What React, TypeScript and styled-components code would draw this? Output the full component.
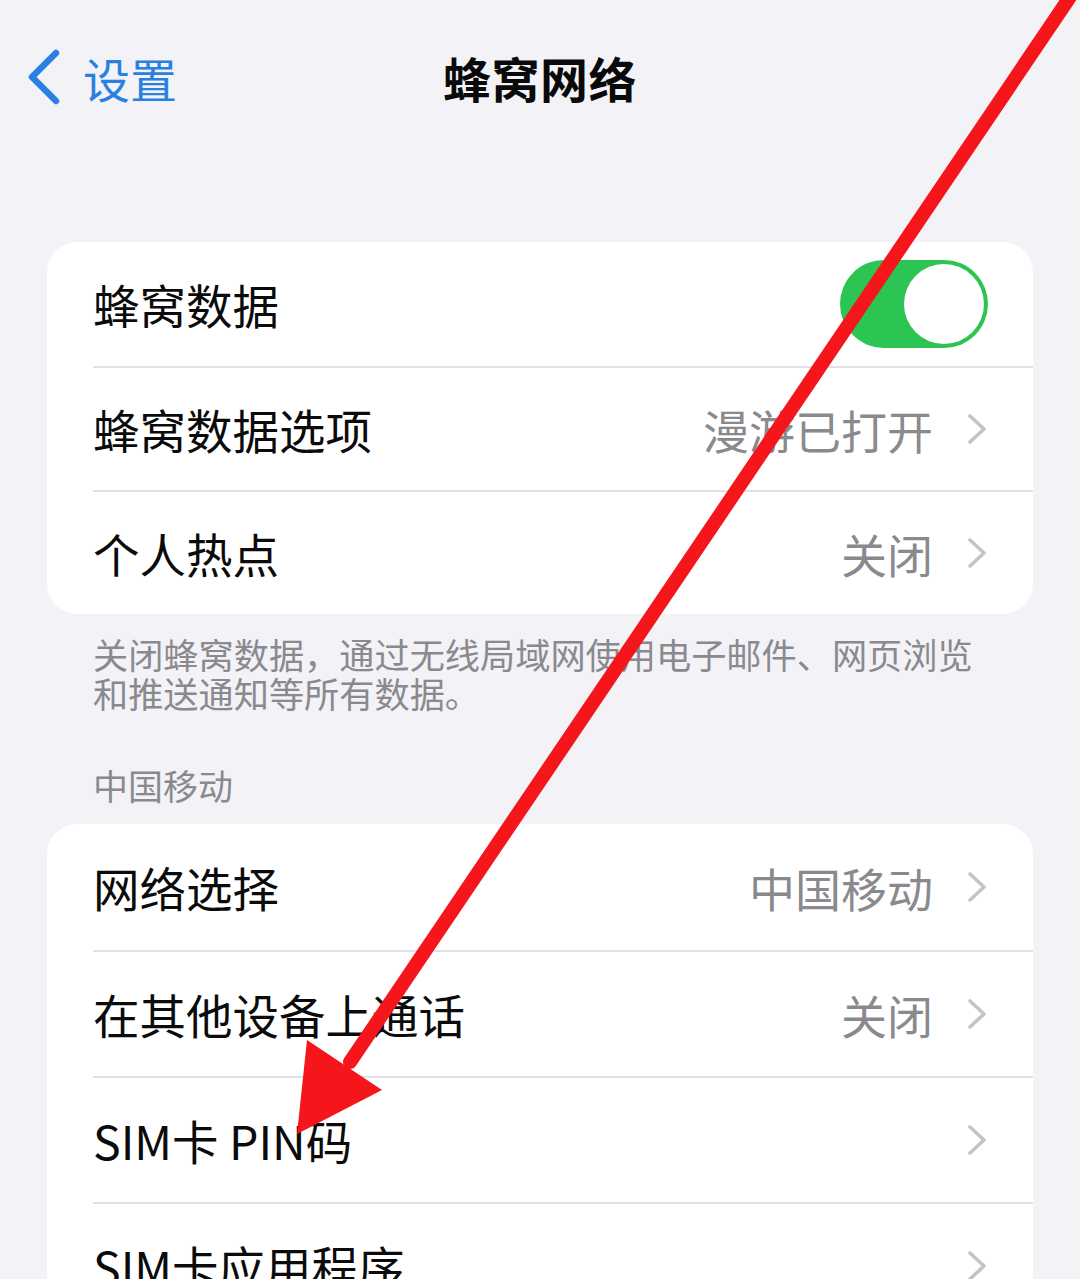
import styled, { createGlobalStyle } from "styled-components";

const GlobalStyle = createGlobalStyle`
  html, body {
    margin: 0;
    padding: 0;
    background: #f2f2f7;
    overflow: hidden;
  }
  body {
    font-family: "Noto Sans CJK SC", "Noto Sans", sans-serif;
    color: #0a0a0a;
  }
`;

const Screen = styled.div`
  position: relative;
  width: 1080px;
  height: 1279px;
  overflow: hidden;
  background: #f2f2f7;
`;

const NavBar = styled.div`
  display: grid;
  grid-template-columns: 1fr auto 1fr;
  align-items: center;
  height: 154px;
  padding: 0 25px;
`;

const BackButton = styled.div`
  display: flex;
  align-items: center;
  gap: 22px;
  color: #2a80e0;
  font-size: 47px;
  line-height: 1;
`;

const NavTitle = styled.h1`
  margin: 0;
  font-size: 48px;
  font-weight: 700;
  line-height: 1;
  letter-spacing: 0.5px;
`;

const Content = styled.div`
  padding: 0 47px;
`;

const Card = styled.div<{ $top: number }>`
  margin-top: ${(p) => p.$top}px;
  background: #ffffff;
  border-radius: 30px;
  overflow: hidden;
`;

const Row = styled.div`
  padding-left: 46px;
`;

const RowBody = styled.div<{ $h: number; $first?: boolean }>`
  box-sizing: border-box;
  height: ${(p) => p.$h}px;
  display: flex;
  align-items: center;
  padding-right: 46px;
  border-top: ${(p) => (p.$first ? "none" : "2px solid #e1e1e5")};
`;

const Label = styled.span`
  flex: 1;
  font-size: 46.5px;
  line-height: 1;
  color: #0b0b0b;
`;

const Value = styled.span`
  font-size: 46px;
  line-height: 1;
  color: #8a8a8e;
  margin-right: 34px;
`;

const Toggle = styled.div`
  position: relative;
  width: 148px;
  height: 88px;
  border-radius: 44px;
  background: #2cc553;
  margin-right: -1px;
`;

const Knob = styled.div`
  position: absolute;
  top: 4px;
  right: 4px;
  width: 80px;
  height: 80px;
  border-radius: 50%;
  background: #ffffff;
`;

const Footer = styled.p`
  margin: 20px 0 0;
  padding-left: 46px;
  font-size: 35.2px;
  line-height: 39px;
  color: #8a8a8e;
`;

const SectionHeader = styled.div`
  margin-top: 53px;
  padding-left: 46px;
  font-size: 35px;
  line-height: 40px;
  color: #8a8a8e;
`;

const Overlay = styled.svg`
  position: absolute;
  top: 0;
  left: 0;
  pointer-events: none;
`;

const Chevron = () => (
  <svg width="20" height="30" viewBox="0 0 20 30">
    <path
      d="M3 2 L17 15 L3 28"
      fill="none"
      stroke="#c4c4c7"
      strokeWidth="3.6"
      strokeLinecap="round"
      strokeLinejoin="round"
    />
  </svg>
);

const BackChevron = () => (
  <svg width="36" height="56" viewBox="0 0 36 56">
    <path
      d="M31 4 L7 28 L31 52"
      fill="none"
      stroke="#2a80e0"
      strokeWidth="6.5"
      strokeLinecap="round"
      strokeLinejoin="round"
    />
  </svg>
);

type Item = { label: string; value?: string; toggle?: boolean };

const cellular: Item[] = [
  { label: "蜂窝数据", toggle: true },
  { label: "蜂窝数据选项", value: "漫游已打开" },
  { label: "个人热点", value: "关闭" },
];

const carrier: Item[] = [
  { label: "网络选择", value: "中国移动" },
  { label: "在其他设备上通话", value: "关闭" },
  { label: "SIM卡 PIN码" },
  { label: "SIM卡应用程序" },
];

function Group({ items, rowHeight, top }: { items: Item[]; rowHeight: number; top: number }) {
  return (
    <Card $top={top}>
      {items.map((item, i) => (
        <Row key={item.label}>
          <RowBody $h={rowHeight} $first={i === 0}>
            <Label>{item.label}</Label>
            {item.toggle ? (
              <Toggle>
                <Knob />
              </Toggle>
            ) : (
              <>
                {item.value && <Value>{item.value}</Value>}
                <Chevron />
              </>
            )}
          </RowBody>
        </Row>
      ))}
    </Card>
  );
}

export default function App() {
  return (
    <>
      <GlobalStyle />
      <Screen>
        <NavBar>
          <BackButton>
            <BackChevron />
            <span>设置</span>
          </BackButton>
          <NavTitle>蜂窝网络</NavTitle>
          <div />
        </NavBar>
        <Content>
          <Group items={cellular} rowHeight={124} top={88} />
          <Footer>
            关闭蜂窝数据，通过无线局域网使用电子邮件、网页浏览
            <br />
            和推送通知等所有数据。
          </Footer>
          <SectionHeader>中国移动</SectionHeader>
          <Group items={carrier} rowHeight={126} top={19} />
        </Content>

        {/* red annotation arrow drawn over the list */}
        <Overlay width="1080" height="1279" viewBox="0 0 1080 1279">
          <line
            x1="1072"
            y1="-6"
            x2="350"
            y2="1062"
            stroke="#f5161c"
            strokeWidth="14"
            strokeLinecap="round"
          />
          <polygon points="297,1134 307,1040 382,1090" fill="#f5161c" />
        </Overlay>
      </Screen>
    </>
  );
}
